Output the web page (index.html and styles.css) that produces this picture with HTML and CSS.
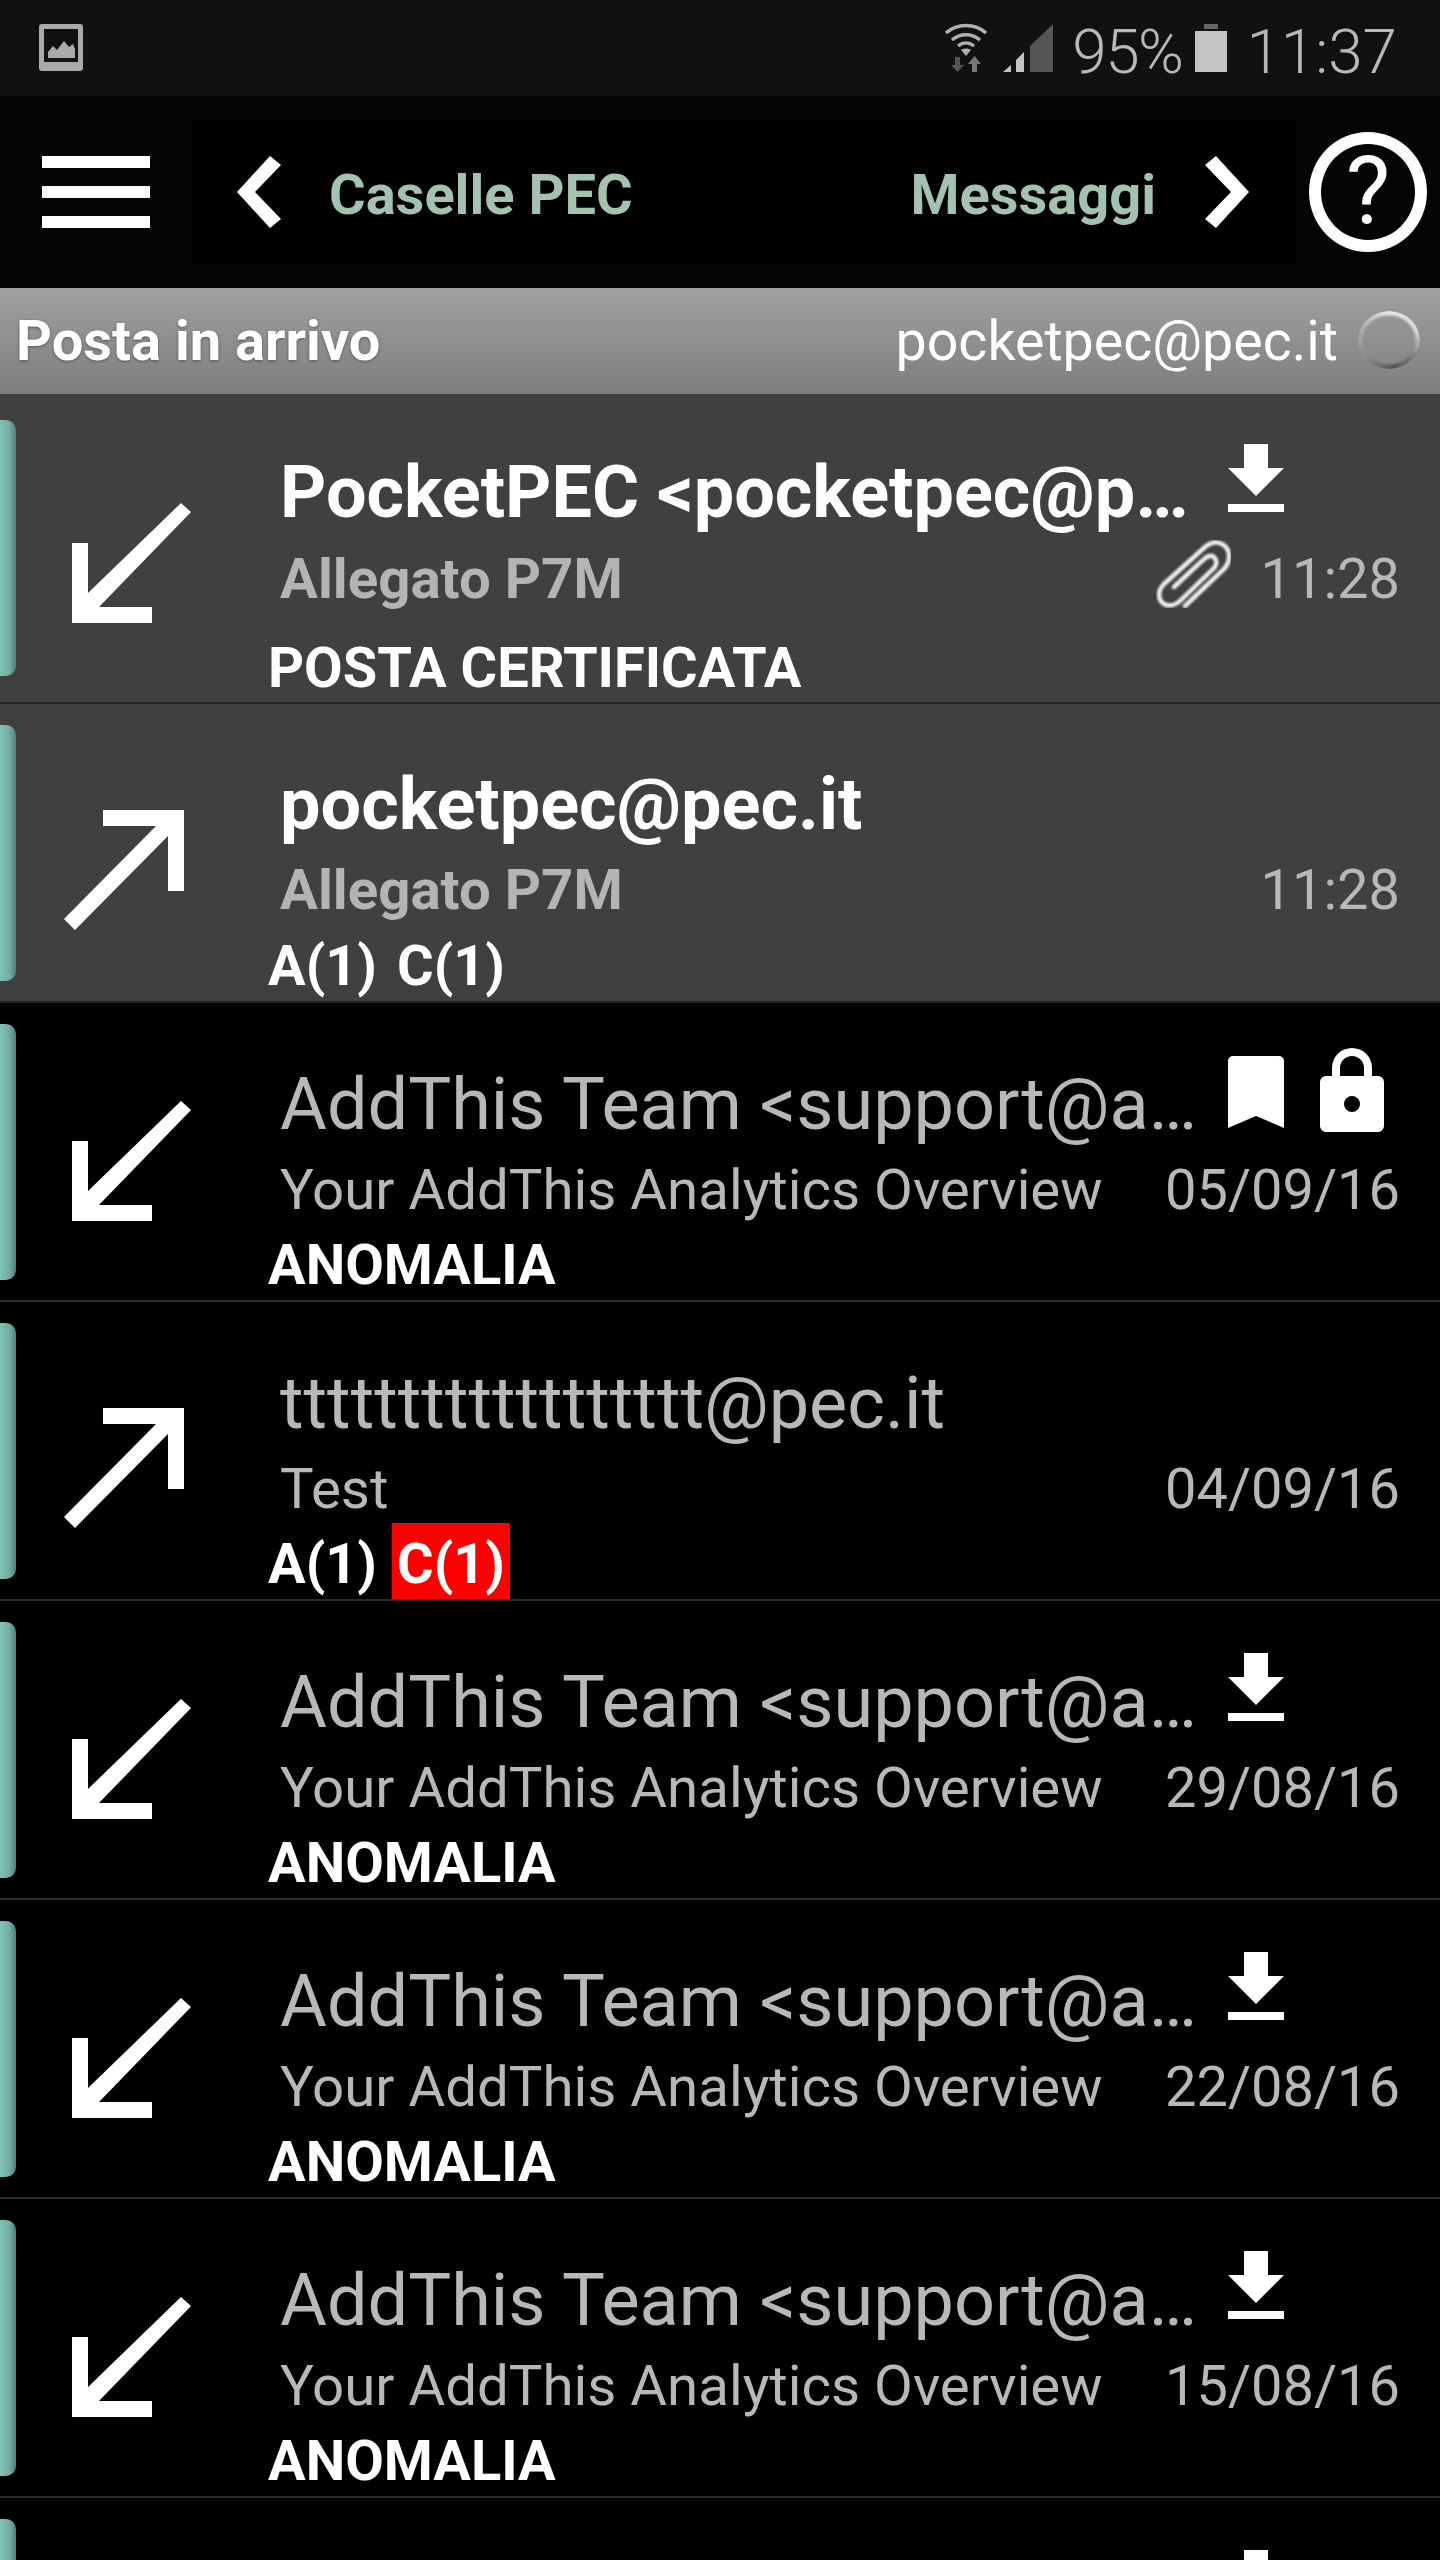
FILE: index.html
```html
<!DOCTYPE html>
<html lang="it">
  <head>
    <meta charset="UTF-8" />
    <meta name="viewport" content="width=device-width, initial-scale=1.0" />
    <title>PocketPEC</title>
    <link rel="stylesheet" href="styles.css">
  </head>
  <body>
    <!-- shared icons -->
    <svg class="defs" width="0" height="0">
      <symbol id="arrow-in" viewBox="0 0 119 120"><polygon points="0,40 16,40 16,90 109,0 119,9 27,104 80,104 80,120 0,120"/></symbol>
      <symbol id="arrow-out" viewBox="0 0 121 120"><polygon points="39,0 120,0 120,81 104,81 104,26 11,120 0,109 92,16 39,16"/></symbol>
      <symbol id="download" viewBox="0 0 56 68"><path d="M16 0h24v24h16L28 52 0 24h16zM0 60h56v8H0z"/></symbol>
    </svg>

    <!-- STATUS BAR -->
    <div class="statusbar">
      <svg class="st-image" viewBox="0 0 44 47"><path fill-rule="evenodd" d="M3 0h38a3 3 0 0 1 3 3v41a3 3 0 0 1-3 3H3a3 3 0 0 1-3-3V3a3 3 0 0 1 3-3zM5 5v33h34V5zM9 34v-6l5-6 4 4 7-9 5 6 4-3 2 5v9z"/></svg>
      <div class="st-right">
        <svg class="st-wifi" viewBox="0 0 42 49">
          <g fill="none" stroke="#b0b0b0" stroke-width="3.5"><path d="M1 10C12 0 30 0 41 10"/><path d="M7 17c8-7 20-7 28 0"/><path d="M13 23c5-4 11-4 16 0"/></g>
          <path fill="#b0b0b0" d="M21 33l-5-6c3-2 7-2 10 0z"/>
          <path fill="#555" d="M10 34h5v8h4l-6.500 7L6 42h4z"/>
          <path fill="#777" d="M27 49v-8h-4l6.500-8 6.500 8h-4v8z"/>
        </svg>
        <svg class="st-signal" viewBox="0 0 50 48"><path fill="#555" d="M50 0v48H27V22z"/><path fill="#c4c4c4" d="M21 28v20h-8V36zM8 41v7H0z"/></svg>
        <span class="st-text">95%</span>
        <svg class="st-battery" viewBox="0 0 32 48"><path fill="#666" d="M9 0h14v5H9z"/><path fill="#c4c4c4" d="M0 7h32v41H0z"/></svg>
        <span class="st-text st-clock">11:37</span>
      </div>
    </div>

    <!-- TOOLBAR -->
    <div class="toolbar">
      <div class="menu"><i></i><i></i><i></i></div>
      <div class="nav">
        <svg class="chev" viewBox="0 0 44 72"><polygon points="0,36 33,0 44,9 18,36 44,63 33,72"/></svg>
        <span class="nav-link nav-prev">Caselle PEC</span>
        <span class="nav-link nav-next">Messaggi</span>
        <svg class="chev" viewBox="0 0 44 72"><polygon points="44,36 11,0 0,9 26,36 0,63 11,72"/></svg>
      </div>
      <div class="help">?</div>
    </div>

    <!-- SUB HEADER -->
    <div class="subheader">
      <span class="folder">Posta in arrivo</span>
      <span class="account">pocketpec@pec.it</span>
      <span class="spinner"></span>
    </div>

    <!-- MESSAGES -->
    <ul class="messages">
      <li class="row row-first row-sel">
        <span class="accent"></span>
        <svg class="dir dir-in"><use href="#arrow-in"/></svg>
        <div class="msg">
          <div class="line-top">
            <span class="title">PocketPEC &lt;pocketpec@p…</span>
            <span class="flags"><svg class="flag"><use href="#download"/></svg></span>
          </div>
          <div class="line-mid">
            <span class="subject">Allegato P7M</span>
            <svg class="clip" viewBox="0 0 75 68">
              <filter id="soft"><feGaussianBlur stdDeviation="1"/></filter>
              <g fill="none" stroke="#efefef" stroke-width="4.500" stroke-linecap="round" filter="url(#soft)">
                <path d="M29 66 L68 29 C76 20 74 8 66 4 C60 1 54 3 49 7 L8 44 C1 51 2 60 8 64 C13 67 20 65 24 61 L58 28 C63 22 59 15 53 16 C50 17 48 19 46 21 L18 47"/>
              </g>
            </svg>
            <span class="date">11:28</span>
          </div>
          <div class="label"><span>POSTA CERTIFICATA</span></div>
        </div>
      </li>
      <li class="row row-second row-sel">
        <span class="accent"></span>
        <svg class="dir dir-out"><use href="#arrow-out"/></svg>
        <div class="msg">
          <div class="line-top">
            <span class="title">pocketpec@pec.it</span>
          </div>
          <div class="line-mid">
            <span class="subject">Allegato P7M</span>
            <span class="date">11:28</span>
          </div>
          <div class="label"><span>A(1)</span><span class="tag">C(1)</span></div>
        </div>
      </li>
      <li class="row">
        <span class="accent"></span>
        <svg class="dir dir-in"><use href="#arrow-in"/></svg>
        <div class="msg">
          <div class="line-top">
            <span class="title">AddThis Team &lt;support@a…</span>
            <span class="flags">
              <svg class="flag-mark" viewBox="0 0 56 72"><path d="M5 0h46a5 5 0 0 1 5 5v67L28 60 0 72V5a5 5 0 0 1 5-5z"/></svg>
              <svg class="flag-lock" viewBox="0 0 64 84"><path fill-rule="evenodd" d="M12 28V20a20 20 0 0 1 40 0v8h6a6 6 0 0 1 6 6v44a6 6 0 0 1-6 6H6a6 6 0 0 1-6-6V34a6 6 0 0 1 6-6zM20 28h24V20a12 12 0 0 0-24 0zM32 48a8 8 0 1 0 0 16 8 8 0 0 0 0-16z"/></svg>
            </span>
          </div>
          <div class="line-mid">
            <span class="subject">Your AddThis Analytics Overview</span>
            <span class="date">05/09/16</span>
          </div>
          <div class="label"><span>ANOMALIA</span></div>
        </div>
      </li>
      <li class="row">
        <span class="accent"></span>
        <svg class="dir dir-out"><use href="#arrow-out"/></svg>
        <div class="msg">
          <div class="line-top">
            <span class="title">tttttttttttttttttt@pec.it</span>
          </div>
          <div class="line-mid">
            <span class="subject">Test</span>
            <span class="date">04/09/16</span>
          </div>
          <div class="label"><span>A(1)</span><span class="tag tag-red">C(1)</span></div>
        </div>
      </li>
      <li class="row">
        <span class="accent"></span>
        <svg class="dir dir-in"><use href="#arrow-in"/></svg>
        <div class="msg">
          <div class="line-top">
            <span class="title">AddThis Team &lt;support@a…</span>
            <span class="flags"><svg class="flag"><use href="#download"/></svg></span>
          </div>
          <div class="line-mid">
            <span class="subject">Your AddThis Analytics Overview</span>
            <span class="date">29/08/16</span>
          </div>
          <div class="label"><span>ANOMALIA</span></div>
        </div>
      </li>
      <li class="row">
        <span class="accent"></span>
        <svg class="dir dir-in"><use href="#arrow-in"/></svg>
        <div class="msg">
          <div class="line-top">
            <span class="title">AddThis Team &lt;support@a…</span>
            <span class="flags"><svg class="flag"><use href="#download"/></svg></span>
          </div>
          <div class="line-mid">
            <span class="subject">Your AddThis Analytics Overview</span>
            <span class="date">22/08/16</span>
          </div>
          <div class="label"><span>ANOMALIA</span></div>
        </div>
      </li>
      <li class="row">
        <span class="accent"></span>
        <svg class="dir dir-in"><use href="#arrow-in"/></svg>
        <div class="msg">
          <div class="line-top">
            <span class="title">AddThis Team &lt;support@a…</span>
            <span class="flags"><svg class="flag"><use href="#download"/></svg></span>
          </div>
          <div class="line-mid">
            <span class="subject">Your AddThis Analytics Overview</span>
            <span class="date">15/08/16</span>
          </div>
          <div class="label"><span>ANOMALIA</span></div>
        </div>
      </li>
      <!-- only the top of this row fits on screen -->
      <li class="row row-last">
        <span class="accent"></span>
        <svg class="dir dir-in"><use href="#arrow-in"/></svg>
        <div class="msg">
          <div class="line-top">
            <span class="flags"><svg class="flag"><use href="#download"/></svg></span>
          </div>
        </div>
      </li>
    </ul>
  </body>
</html>
```

FILE: styles.css
```css
*{
    padding:0;
    margin:0;
    box-sizing:border-box;
}
html,body{
    height:2560px;
    overflow:hidden;
    background:#000;
}
body{
    font-family:Roboto,"Liberation Sans",sans-serif;
    color:#fff;
}
.defs{
    position:absolute;
}

/* status bar */
.statusbar{
    height:96px;
    background:#111;
    display:flex;
    align-items:flex-start;
    justify-content:space-between;
    padding:23px 43px 0 39px;
}
.st-image{
    width:44px;
    height:47px;
    margin-top:1px;
    fill:#aaa;
}
.st-right{
    display:flex;
    align-items:flex-start;
}
.st-wifi{
    width:42px;
    height:49px;
}
.st-signal{
    width:50px;
    height:48px;
    margin:1px 19px 0 16px;
}
.st-text{
    font-size:62px;
    line-height:58px;
    font-weight:300;
    color:#b8b8b8;
    height:50px;
    letter-spacing:-1.5px;
}
.st-battery{
    width:32px;
    height:48px;
    margin:1px 19px 0 13px;
}
.st-clock{
    letter-spacing:0;
}

/* toolbar */
.toolbar{
    height:192px;
    background:#030404;
    display:flex;
    align-items:center;
}
.menu{
    width:192px;
    padding-left:42px;
    display:flex;
    flex-direction:column;
    gap:18px;
}
.menu i{
    display:block;
    width:108px;
    height:12px;
    background:#fff;
}
.nav{
    width:1104px;
    height:144px;
    background:#000;
    display:flex;
    align-items:center;
    padding:0 47px 0 45px;
}
.chev{
    width:44px;
    height:72px;
    fill:#fff;
    flex:none;
}
.nav-link{
    font-size:56px;
    font-weight:700;
    color:#a3c2b0;
    padding-top:5px;
}
.nav-prev{
    margin-left:48px;
}
.nav-next{
    margin-left:auto;
    margin-right:49px;
}
.help{
    width:118px;
    height:120px;
    margin-left:13px;
    border:12px solid #fff;
    border-radius:50%;
    text-align:center;
    font-size:94px;
    line-height:94px;
    font-weight:400;
}

/* folder header */
.subheader{
    height:106px;
    background:linear-gradient(#a0a0a0,#7e7e7e);
    display:flex;
    align-items:center;
    padding:0 20px 0 16px;
}
.folder{
    font-size:56px;
    font-weight:700;
    text-shadow:0 1px 3px #555;
}
.account{
    margin-left:auto;
    font-size:55.5px;
}
.spinner{
    width:62px;
    height:58px;
    margin:-2px 0 0 20px;
    border-radius:50%;
    background:conic-gradient(#e8e8e8 0deg,#d8d8d8 70deg,#777 130deg,#555 170deg,#8a8a8a 230deg,#b0b0b0 300deg,#e8e8e8 360deg);
    -webkit-mask:radial-gradient(ellipse at center,transparent 56%,#000 64%);
    mask:radial-gradient(ellipse at center,transparent 56%,#000 64%);
}

/* message list */
.messages{
    list-style:none;
}
.row{
    height:299px;
    display:flex;
    border-bottom:2px solid #2a2a2a;
}
.row-first{
    height:310px;
}
.row-last{
    height:62px;
    border-bottom:0;
}
.row-sel{
    background:#404040;
    border-bottom-color:#222;
}
.accent{
    flex:none;
    width:16px;
    height:256px;
    margin-top:21px;
    border-radius:0 10px 10px 0;
    background:linear-gradient(to right,#82c2b6,#70aca2 60%,#4e7e78);
}
.row-last .accent{
    height:41px;
    border-radius:0 10px 0 0;
}
.dir{
    flex:none;
    fill:#fff;
    overflow:visible;
}
.dir-in{
    width:119px;
    height:120px;
    margin:98px 89px 0 56px;
}
.dir-out{
    width:121px;
    height:120px;
    margin:106px 95px 0 48px;
}
.row-last .dir{
    display:none;
}
.msg{
    flex:1;
    min-width:0;
    padding:45px 40px 0 0;
}
.line-top{
    height:104px;
    display:flex;
    align-items:flex-start;
}
.title{
    flex:1;
    font-size:72px;
    line-height:90px;
    margin-top:12px;
    color:#b8b8b8;
    white-space:nowrap;
}
.flags{
    flex:none;
    width:172px;
    margin-left:auto;
    display:flex;
    align-items:flex-start;
}
.row-last .msg{
    height:62px;
    overflow:hidden;
}
.flag{
    width:56px;
    height:68px;
    margin-top:7px;
    fill:#fff;
}
.flag-mark{
    width:56px;
    height:72px;
    margin-top:8px;
    fill:#fff;
}
.flag-lock{
    width:64px;
    height:84px;
    margin-left:36px;
    fill:#fff;
}
.line-mid{
    height:76px;
    display:flex;
    align-items:flex-start;
    font-size:56px;
    line-height:76px;
    color:#b8b8b8;
}
.subject{
    flex:1;
    font-size:56.4px;
}
.date{
    flex:none;
}
.clip{
    flex:none;
    width:75px;
    height:68px;
    margin:-1px 30px 0 0;
}
.label{
    display:flex;
    gap:15px;
    height:76px;
    margin:-4px 0 0 -12px;
    font-size:56px;
    line-height:82px;
    font-weight:700;
    color:#fff;
    overflow:hidden;
}
.tag{
    padding:0 5px;
}
.tag-red{
    background:#f00;
}

/* the two read-out rows on grey use bold text */
.row-sel .title{
    color:#fff;
    font-weight:700;
}
.row-sel .subject{
    font-weight:700;
    color:#b4b4b4;
}

/* first rows sit a little differently */
.row-first .accent{
    margin-top:26px;
}
.row-first .dir{
    margin-top:109px;
}
.row-first .msg{
    padding-top:43px;
}
.row-first .title{
    margin-top:11px;
}
.row-first .label{
    margin-top:10px;
}
.row-second .msg{
    padding-top:44px;
}
.row-second .label{
    margin-top:-3px;
}
```
